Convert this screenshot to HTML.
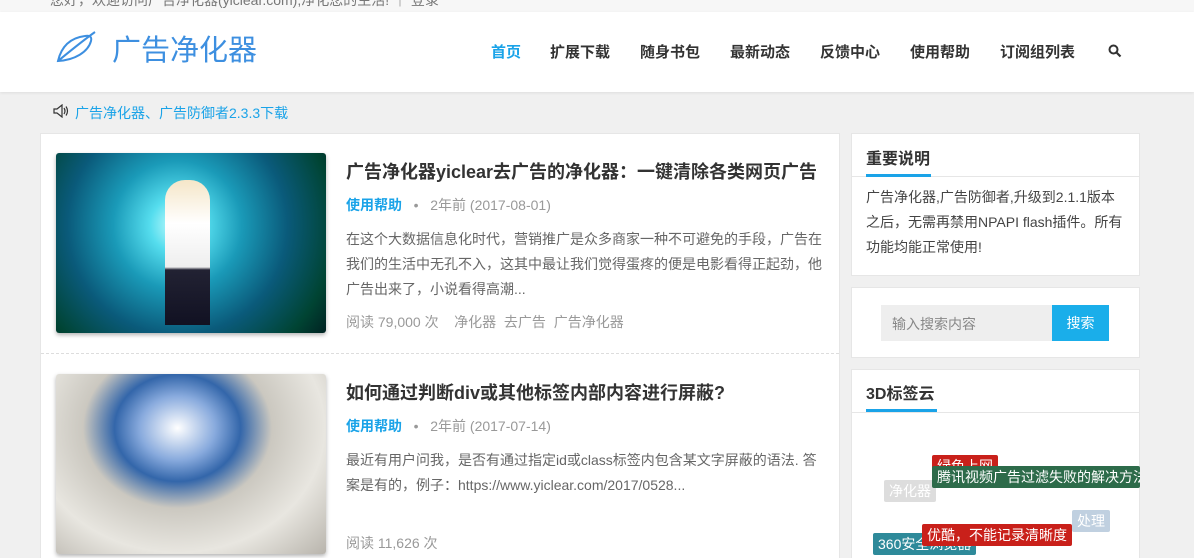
<!DOCTYPE html>
<html><head><meta charset="utf-8"><style>
*{margin:0;padding:0;box-sizing:border-box}
html,body{width:1194px;height:558px;overflow:hidden}
body{background:#f0f0f0;font-family:"Liberation Sans","Noto Sans CJK SC",sans-serif;position:relative;color:#333}
.a{position:absolute;white-space:nowrap}
.top{left:0;top:0;width:1194px;height:12px;background:#f7f7f7;overflow:hidden}
.hdr{left:0;top:12px;width:1194px;height:80px;background:#fff;box-shadow:0 1px 3px rgba(0,0,0,.08)}
.nav{top:41px;font-size:15px;font-weight:bold;color:#333}
.card{background:#fff;border:1px solid #e6e6e6}
.tag{position:absolute;font-size:14px;color:#fff;padding:1px 5px;border-radius:2px;white-space:nowrap}
</style></head><body>
<div class="a top"><div class="a" style="left:50px;top:-10px;font-size:14px;color:#777">您好，欢迎访问广告净化器(yiclear.com),净化您的生活! ｜ 登录</div></div>
<div class="a hdr"></div>
<svg class="a" style="left:55px;top:30px" width="46" height="34" viewBox="0 0 46 34"><path d="M3 31 C6 18 14 8 30 6 C35 5 37 7 36 11 C33 22 20 30 3 31 Z M3 31 C14 22 26 12 40 2" fill="none" stroke="#3d8fe0" stroke-width="2"/></svg>
<div class="a" style="left:112px;top:27px;font-size:29px;color:#3d8fe0">广告净化器</div>
<div class="a nav" style="left:491px;color:#1aa3e8">首页</div>
<div class="a nav" style="left:550px">扩展下载</div>
<div class="a nav" style="left:640px">随身书包</div>
<div class="a nav" style="left:730px">最新动态</div>
<div class="a nav" style="left:820px">反馈中心</div>
<div class="a nav" style="left:910px">使用帮助</div>
<div class="a nav" style="left:1000px">订阅组列表</div>
<svg class="a" style="left:1108px;top:44px" width="14" height="14" viewBox="0 0 14 14"><circle cx="5.5" cy="5.5" r="4" fill="none" stroke="#333" stroke-width="2"/><path d="M8.5 8.5 L12.5 12.5" stroke="#333" stroke-width="2.2"/></svg>
<svg class="a" style="left:53px;top:104px" width="18" height="14" viewBox="0 0 18 14"><path d="M1 5 H4 L9 1 V13 L4 9 H1 Z" fill="none" stroke="#333" stroke-width="1.2"/><path d="M11 4 Q13 7 11 10 M13 2.5 Q16 7 13 11.5" fill="none" stroke="#333" stroke-width="1.2"/></svg>
<div class="a" style="left:75px;top:103px;font-size:14px;color:#1aa3e8">广告净化器、广告防御者2.3.3下载</div>

<div class="a card" style="left:40px;top:133px;width:800px;height:430px"></div>
<div class="a" style="left:56px;top:153px;width:270px;height:180px;border-radius:3px;background:radial-gradient(circle at 45% 40%,#cff 0,#5de 15%,#1a9ab8 35%,#0a5a7a 60%,#043 85%,#022 100%);box-shadow:0 2px 4px rgba(0,0,0,.3)"></div>
<div class="a" style="left:165px;top:180px;width:45px;height:145px;background:linear-gradient(#f5e6c8,#fff 30%,#eee 60%,#223 62%,#112);border-radius:20px 20px 0 0"></div>
<div class="a" style="left:346px;top:158px;font-size:18px;font-weight:bold">广告净化器yiclear去广告的净化器：一键清除各类网页广告</div>
<div class="a" style="left:346px;top:195px;font-size:14px;color:#999"><b style="color:#1aa3e8">使用帮助</b> &nbsp; • &nbsp; 2年前 (2017-08-01)</div>
<div class="a" style="left:346px;top:227px;font-size:14px;line-height:25px;color:#666;white-space:normal;width:480px">在这个大数据信息化时代，营销推广是众多商家一种不可避免的手段，广告在我们的生活中无孔不入，这其中最让我们觉得蛋疼的便是电影看得正起劲，他广告出来了，小说看得高潮...</div>
<div class="a" style="left:346px;top:312px;font-size:14px;color:#999">阅读 79,000 次 &nbsp;&nbsp; 净化器 &nbsp;去广告 &nbsp;广告净化器</div>
<div class="a" style="left:41px;top:353px;width:798px;border-top:1px dashed #ddd"></div>
<div class="a" style="left:56px;top:374px;width:270px;height:180px;border-radius:3px;background:radial-gradient(ellipse at 45% 30%,#fff 0,#8ad 18%,#36a 30%,#cbc8c0 45%,#e8e6e0 70%,#b8b4ac 100%);box-shadow:0 2px 4px rgba(0,0,0,.3)"></div>
<div class="a" style="left:346px;top:379px;font-size:18px;font-weight:bold">如何通过判断div或其他标签内部内容进行屏蔽?</div>
<div class="a" style="left:346px;top:416px;font-size:14px;color:#999"><b style="color:#1aa3e8">使用帮助</b> &nbsp; • &nbsp; 2年前 (2017-07-14)</div>
<div class="a" style="left:346px;top:448px;font-size:14px;line-height:25px;color:#666;white-space:normal;width:480px">最近有用户问我，是否有通过指定id或class标签内包含某文字屏蔽的语法. 答案是有的，例子：https://www.yiclear.com/2017/0528...</div>
<div class="a" style="left:346px;top:533px;font-size:14px;color:#999">阅读 11,626 次</div>

<div class="a card" style="left:851px;top:133px;width:289px;height:143px"></div>
<div class="a" style="left:852px;top:176px;width:287px;border-top:1px solid #e6e6e6"></div>
<div class="a" style="left:866px;top:145px;font-size:16px;font-weight:bold">重要说明</div>
<div class="a" style="left:866px;top:174px;width:65px;height:3px;background:#1aa3e8"></div>
<div class="a" style="left:866px;top:185px;width:260px;font-size:14px;line-height:25px;white-space:normal;color:#444">广告净化器,广告防御者,升级到2.1.1版本之后，无需再禁用NPAPI flash插件。所有功能均能正常使用!</div>
<div class="a card" style="left:851px;top:287px;width:289px;height:71px"></div>
<div class="a" style="left:881px;top:305px;width:171px;height:36px;background:#eee;font-size:14px;color:#888;padding:9px 11px">输入搜索内容</div>
<div class="a" style="left:1052px;top:305px;width:57px;height:36px;background:#1aaeea;color:#fff;font-size:14px;text-align:center;line-height:36px">搜索</div>
<div class="a card" style="left:851px;top:369px;width:289px;height:200px"></div>
<div class="a" style="left:852px;top:412px;width:287px;border-top:1px solid #e6e6e6"></div>
<div class="a" style="left:866px;top:380px;font-size:16px;font-weight:bold">3D标签云</div>
<div class="a" style="left:866px;top:409px;width:71px;height:3px;background:#1aa3e8"></div>
<span class="tag" style="left:932px;top:455px;background:#c9201a;height:16px;overflow:hidden">绿色上网</span>
<span class="tag" style="left:884px;top:480px;background:#ddd">净化器</span>
<span class="tag" style="left:932px;top:466px;background:#2d6b4a;width:208px;overflow:hidden">腾讯视频广告过滤失败的解决方法</span>
<span class="tag" style="left:1072px;top:510px;background:#c0d0e0">处理</span>
<span class="tag" style="left:873px;top:533px;background:#2e8a9a">360安全浏览器</span>
<span class="tag" style="left:922px;top:524px;background:#c9201a">优酷，不能记录清晰度</span>
</body></html>
